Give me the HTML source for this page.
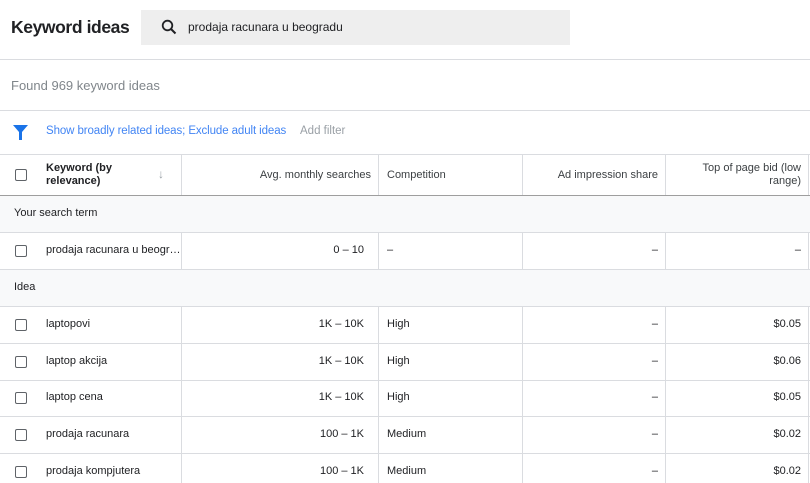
<!DOCTYPE html>
<html><head><style>
*{margin:0;padding:0;box-sizing:border-box}
body{width:810px;height:483px;overflow:hidden;background:#fff;font-family:"Liberation Sans",Arial,sans-serif;color:#202124;position:relative}
.a{position:absolute}
.hl{position:absolute;left:0;width:810px;height:1px;background:#dadce0}
.vl{position:absolute;width:1px;background:#dadce0}
.cb{position:absolute;left:15px;width:12px;height:12px;border:1.5px solid #5f6368;border-radius:2px}
.t{position:absolute;font-size:11px;line-height:13px;color:#202124}
.r{text-align:right}
.sec{position:absolute;left:0;width:810px;background:#f8f9fa}
</style></head><body>
<div class="a" style="left:11px;top:17px;font-size:17.5px;font-weight:bold;color:#202124;letter-spacing:-0.4px">Keyword ideas</div>
<div class="a" style="left:141px;top:10px;width:429px;height:35px;background:#eeeeee"></div>
<svg class="a" style="left:161px;top:19px" width="16" height="16" viewBox="0 0 16 16"><circle cx="6.5" cy="6.5" r="4.8" fill="none" stroke="#202124" stroke-width="1.8"/><path d="M10 10 L14.5 14.5" stroke="#202124" stroke-width="2"/></svg>
<div class="a" style="left:188px;top:20px;font-size:12px;color:#202124">prodaja racunara u beogradu</div>
<div class="hl" style="top:59px"></div>
<div class="a" style="left:11px;top:78px;font-size:13px;color:#80868b">Found 969 keyword ideas</div>
<div class="hl" style="top:110px"></div>
<svg class="a" style="left:13px;top:125px" width="15" height="15" viewBox="0 0 15 15"><path d="M0 0H15L9 7V15H6V7Z" fill="#1a73e8"/></svg>
<div class="a" style="left:46px;top:125px;font-size:11.5px;color:#4285f4;letter-spacing:-0.1px">Show broadly related ideas; Exclude adult ideas</div>
<div class="a" style="left:300px;top:125px;font-size:11.5px;color:#9aa0a6">Add filter</div>
<div class="hl" style="top:154px"></div>
<div class="hl" style="top:195px;background:#9e9e9e;height:1.5px"></div>
<div class="sec" style="top:196px;height:36px"></div>
<div class="sec" style="top:269px;height:37px"></div>
<div class="hl" style="top:232px"></div>
<div class="hl" style="top:269px"></div>
<div class="hl" style="top:306px"></div>
<div class="hl" style="top:343px"></div>
<div class="hl" style="top:380px"></div>
<div class="hl" style="top:416px"></div>
<div class="hl" style="top:453px"></div>
<div class="vl" style="left:181px;top:155px;height:40px"></div>
<div class="vl" style="left:378px;top:155px;height:40px"></div>
<div class="vl" style="left:522px;top:155px;height:40px"></div>
<div class="vl" style="left:665px;top:155px;height:40px"></div>
<div class="vl" style="left:808px;top:155px;height:40px"></div>
<div class="vl" style="left:181px;top:232px;height:37px"></div>
<div class="vl" style="left:378px;top:232px;height:37px"></div>
<div class="vl" style="left:522px;top:232px;height:37px"></div>
<div class="vl" style="left:665px;top:232px;height:37px"></div>
<div class="vl" style="left:808px;top:232px;height:37px"></div>
<div class="vl" style="left:181px;top:306px;height:177px"></div>
<div class="vl" style="left:378px;top:306px;height:177px"></div>
<div class="vl" style="left:522px;top:306px;height:177px"></div>
<div class="vl" style="left:665px;top:306px;height:177px"></div>
<div class="vl" style="left:808px;top:306px;height:177px"></div>
<div class="cb" style="top:169px"></div>
<div class="t" style="left:46px;top:162px;font-weight:bold;color:#202124">Keyword (by<br>relevance)</div>
<div class="t" style="left:158px;top:168px;color:#9aa0a6;font-size:12px">↓</div>
<div class="t r" style="left:190px;width:181px;top:169px;color:#3c4043">Avg. monthly searches</div>
<div class="t" style="left:387px;top:169px;color:#3c4043">Competition</div>
<div class="t r" style="left:530px;width:128px;top:169px;color:#3c4043">Ad impression share</div>
<div class="t r" style="left:672px;width:129px;top:162px;color:#3c4043">Top of page bid (low<br>range)</div>
<div class="t" style="left:14px;top:207px">Your search term</div>
<div class="cb" style="top:245px"></div>
<div class="t" style="left:46px;top:244px">prodaja racunara u beogr…</div>
<div class="t r" style="left:190px;width:174px;top:244px">0 – 10</div>
<div class="t" style="left:387px;top:244px">–</div>
<div class="t r" style="left:530px;width:128px;top:244px">–</div>
<div class="t r" style="left:672px;width:129px;top:244px">–</div>
<div class="t" style="left:14px;top:281px">Idea</div>
<div class="cb" style="top:319px"></div><div class="t" style="left:46px;top:318px">laptopovi</div><div class="t r" style="left:190px;width:174px;top:318px">1K – 10K</div><div class="t" style="left:387px;top:318px">High</div><div class="t r" style="left:530px;width:128px;top:318px">–</div><div class="t r" style="left:672px;width:129px;top:318px">$0.05</div>
<div class="cb" style="top:356px"></div><div class="t" style="left:46px;top:355px">laptop akcija</div><div class="t r" style="left:190px;width:174px;top:355px">1K – 10K</div><div class="t" style="left:387px;top:355px">High</div><div class="t r" style="left:530px;width:128px;top:355px">–</div><div class="t r" style="left:672px;width:129px;top:355px">$0.06</div>
<div class="cb" style="top:392px"></div><div class="t" style="left:46px;top:391px">laptop cena</div><div class="t r" style="left:190px;width:174px;top:391px">1K – 10K</div><div class="t" style="left:387px;top:391px">High</div><div class="t r" style="left:530px;width:128px;top:391px">–</div><div class="t r" style="left:672px;width:129px;top:391px">$0.05</div>
<div class="cb" style="top:429px"></div><div class="t" style="left:46px;top:428px">prodaja racunara</div><div class="t r" style="left:190px;width:174px;top:428px">100 – 1K</div><div class="t" style="left:387px;top:428px">Medium</div><div class="t r" style="left:530px;width:128px;top:428px">–</div><div class="t r" style="left:672px;width:129px;top:428px">$0.02</div>
<div class="cb" style="top:466px"></div><div class="t" style="left:46px;top:465px">prodaja kompjutera</div><div class="t r" style="left:190px;width:174px;top:465px">100 – 1K</div><div class="t" style="left:387px;top:465px">Medium</div><div class="t r" style="left:530px;width:128px;top:465px">–</div><div class="t r" style="left:672px;width:129px;top:465px">$0.02</div>
</body></html>
